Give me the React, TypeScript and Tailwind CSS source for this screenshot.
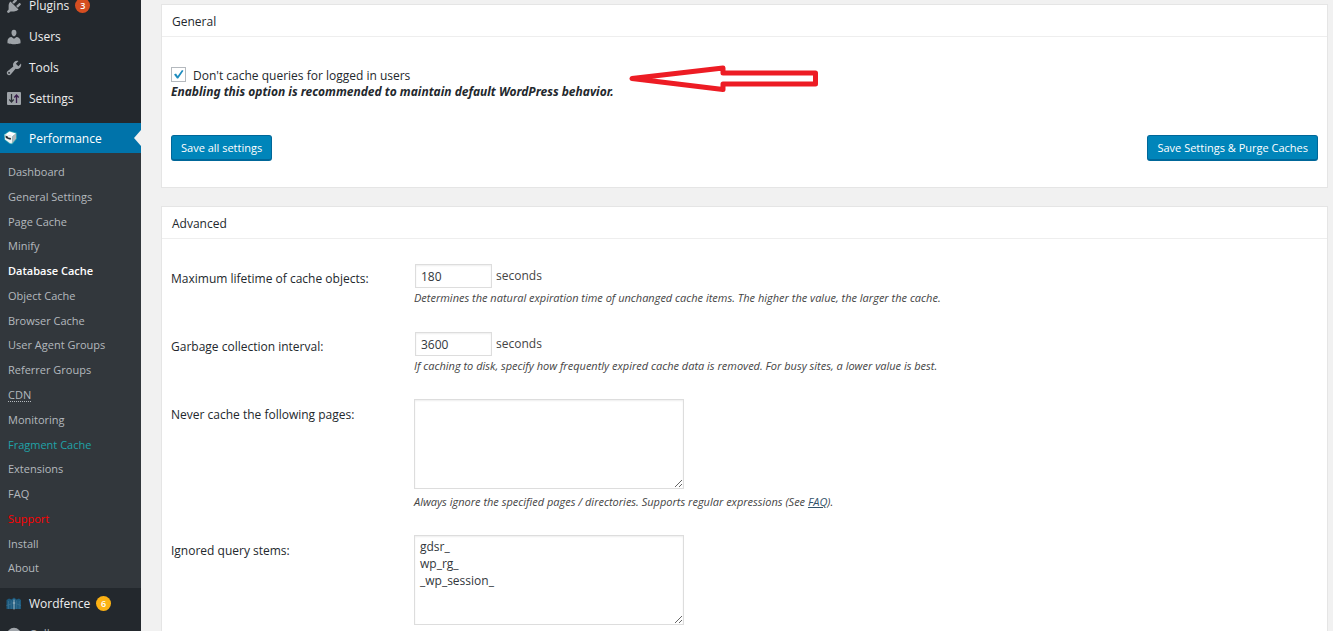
import React, { useState } from 'react';

type Item = { label: string; icon: React.ReactNode; badge?: string };

const iconClass = 'size-[18px]';

const PluginIcon = () => (
  <svg viewBox="0 0 20 20" className={iconClass} fill="currentColor" aria-hidden="true">
    <path d="M13.11 4.36 9.87 7.6 8 5.73l3.24-3.24c.35-.34 1.05-.2 1.56.32.52.51.66 1.21.31 1.55zm-8 1.77.91-1.12 9.01 9.01-1.19.84c-.71.71-2.63 1.16-3.82 1.16H6.14L4.9 17.26c-.59.59-1.54.59-2.12 0a1.49 1.49 0 0 1 0-2.12l1.24-1.24v-3.88c0-1.13.4-3.19 1.09-3.89zm7.26 3.97 3.24-3.24c.34-.35 1.04-.21 1.55.31.52.51.66 1.21.31 1.55l-3.24 3.25z" />
  </svg>
);
const UserIcon = () => (
  <svg viewBox="0 0 20 20" className={iconClass} fill="currentColor" aria-hidden="true">
    <path d="M10 9.25c-2.27 0-2.73-3.44-2.73-3.44C7 4.02 7.82 2 9.97 2c2.16 0 2.98 2.02 2.71 3.81 0 0-.41 3.44-2.68 3.44zm0 2.57L12.72 10c2.39 0 4.52 2.33 4.52 4.53v2.49s-3.65 1.13-7.24 1.13c-3.65 0-7.24-1.13-7.24-1.13v-2.49c0-2.25 1.94-4.48 4.47-4.48z" />
  </svg>
);
const ToolIcon = () => (
  <svg viewBox="0 0 20 20" className={iconClass} fill="currentColor" aria-hidden="true">
    <path d="M16.68 9.77a4.543 4.543 0 0 1-4.95.99l-5.41 6.52c-.99.99-2.59.99-3.58 0s-.99-2.59 0-3.57l6.52-5.42c-.68-1.65-.35-3.61.99-4.95 1.28-1.28 3.12-1.62 4.72-1.06l-2.89 2.89 2.82 2.82 2.86-2.87c.53 1.58.18 3.39-1.08 4.65zM3.81 16.21c.4.39 1.04.39 1.43 0 .4-.4.4-1.04 0-1.43-.39-.4-1.03-.4-1.43 0a1.02 1.02 0 0 0 0 1.43z" />
  </svg>
);
const SettingsIcon = () => (
  <svg viewBox="0 0 18 18" className={iconClass} aria-hidden="true">
    <rect x="2" y="2" width="14" height="13" rx="1" fill="#9ea3a8" />
    <path d="M6.500 4v8M4.300 9.500l2.200 2.500 2.200-2.500" stroke="#2b3036" strokeWidth="1.200" fill="none" />
    <path d="M11.500 13V5M9.300 7.500l2.200-2.500 2.200 2.500" stroke="#3b1f4d" strokeWidth="1.300" fill="none" />
  </svg>
);
const CubeIcon = () => (
  <svg viewBox="0 0 16 16" className="size-4" aria-hidden="true">
    <path d="M1 4.500 6 .800 13.500 2.500 14 8.500 9.500 14.300 6.500 14 1.300 9.500z" fill="#2aa5b5" />
    <path d="M2 4.500 6.500 1.600 13 3.500 9.500 6.300z" fill="#ffffff" />
    <path d="M1.600 4.300 9.500 6 8.800 13.600 7 13.300 2 9.400z" fill="#f1f3f3" />
    <path d="M9.500 6.300 13.200 3.500 13 8.700 9 13.500z" fill="#b4b8ba" />
    <path d="M2.400 5.600 4.800 6.500 5.200 7.500 8 8 7.700 9.800 5.600 9.200 2.800 7.900z" fill="#2a2f33" />
  </svg>
);
const FenceIcon = () => (
  <svg viewBox="0 0 18 18" className={iconClass} aria-hidden="true">
    <path d="M1.500 5 4 3.500 6.500 4.500 9 2.500l2.500 2L14 3.500 16 5v9H1.500z" fill="#1d5a7e" />
    <path d="M3.500 6v8M6.200 5.500V14M11.700 5.500V14M14.200 6v8M1.500 10.500l4.500-1.500M16 10.500 12 9" stroke="#38708f" strokeWidth=".8" />
    <path d="M9 4.500V14.500M7.800 8h2.400" stroke="#a3bac6" strokeWidth="1" />
  </svg>
);
const CollapseIcon = () => (
  <svg viewBox="0 0 20 20" className={iconClass} aria-hidden="true">
    <circle cx="10" cy="10" r="8" fill="currentColor" />
    <path d="M12.500 6v8L7 10z" fill="#23282d" />
  </svg>
);

const topItems: Item[] = [
  { label: 'Plugins', icon: <PluginIcon />, badge: '3' },
  { label: 'Users', icon: <UserIcon /> },
  { label: 'Tools', icon: <ToolIcon /> },
  { label: 'Settings', icon: <SettingsIcon /> },
];

const subItems = [
  'Dashboard', 'General Settings', 'Page Cache', 'Minify', 'Database Cache', 'Object Cache',
  'Browser Cache', 'User Agent Groups', 'Referrer Groups', 'CDN', 'Monitoring', 'Fragment Cache',
  'Extensions', 'FAQ', 'Support', 'Install', 'About',
];

const subStyles: Record<string, string> = {
  'Database Cache': 'font-semibold text-white',
  'Fragment Cache': 'text-[#1fa3a8]',
  Support: 'text-[#ff0000]',
};

function MenuLink({ item, badgeClass }: { item: Item; badgeClass: string }) {
  return (
    <a href="#" className="flex h-[31px] items-center text-[12px] text-[#eeeeee]">
      <span className="flex w-[29px] items-center pl-[5px] text-[#9ea3a8]">{item.icon}</span>
      {item.label}
      {item.badge && (
        <span className={`ml-[6px] flex size-[15px] items-center justify-center rounded-full text-[9px] font-semibold text-white ${badgeClass}`}>
          {item.badge}
        </span>
      )}
    </a>
  );
}

function Sidebar() {
  return (
    <nav className="w-[141px] shrink-0 bg-[#23282d]">
      <div className="-mt-[10px] flex flex-col">
        {topItems.map((item) => (
          <MenuLink key={item.label} item={item} badgeClass="bg-[#d54e21]" />
        ))}
      </div>
      <a href="#" className="mt-[9px] flex h-[30px] items-center bg-[#0073aa] text-[12px] text-white">
        <span className="flex w-[29px] items-center pl-[3px]"><CubeIcon /></span>
        <span className="leading-[30px] pt-px">Performance</span>
        <svg viewBox="0 0 7 16" className="ml-auto h-4 w-[7px]" aria-hidden="true"><path d="M7 0v16L0 8z" fill="#f1f1f1" /></svg>
      </a>
      <ul className="flex h-[435px] flex-col bg-[#32373c] py-[7px]">
        {subItems.map((label) => (
          <li key={label} className="flex flex-1 items-center pl-2 text-[11px]">
            <a href="#" className={subStyles[label] ?? 'text-[#b4b9be]'}>
              {label === 'CDN' ? <abbr title="Content Delivery Network" className="underline decoration-dotted underline-offset-2">CDN</abbr> : label}
            </a>
          </li>
        ))}
      </ul>
      <MenuLink item={{ label: 'Wordfence', icon: <FenceIcon />, badge: '6' }} badgeClass="bg-[#fcb214]" />
      <button type="button" className="flex h-[31px] w-full items-center text-[12px] text-[#a0a5aa]">
        <span className="flex w-[29px] items-center pl-[5px]"><CollapseIcon /></span>
        Collapse menu
      </button>
    </nav>
  );
}

function Panel({ title, children }: { title: string; children: React.ReactNode }) {
  return (
    <section className="border border-[#e5e5e5] bg-white">
      <h3 className="border-b border-[#eeeeee] px-[10px] pt-[2px] text-[12px] leading-[29px] text-[#23282d]">{title}</h3>
      {children}
    </section>
  );
}

function PrimaryButton({ children }: { children: React.ReactNode }) {
  return (
    <button type="button" className="h-[26px] rounded-[3px] border border-b-2 border-[#006799] bg-[#0085ba] px-[9px] text-[11px] leading-[22px] text-white">
      {children}
    </button>
  );
}

const fieldClass = 'border border-[#dddddd] bg-white px-[5px] text-[12px] text-[#32373c] shadow-[inset_0_1px_2px_rgba(0,0,0,0.07)] outline-none';
const hintClass = 'text-[11px] italic leading-[19px] text-[#444444]';

function Row({ id, label, children }: { id: string; label: string; children: React.ReactNode }) {
  return (
    <div className="flex">
      <label htmlFor={id} className="w-[243px] shrink-0 pt-[6px] text-[12px] leading-[20px] text-[#23282d]">{label}</label>
      <div className="min-w-0 flex-1">{children}</div>
    </div>
  );
}

function NumberRow({ id, label, value, hint }: { id: string; label: string; value: string; hint: string }) {
  return (
    <Row id={id} label={label}>
      <div className="flex h-[25px] items-center gap-[4px] pt-px text-[12px] text-[#444444]">
        <input id={id} type="text" defaultValue={value} className={`ml-px h-6 w-[77px] ${fieldClass}`} />
        seconds
      </div>
      <p className={hintClass}>{hint}</p>
    </Row>
  );
}

export default function App() {
  const [checked, setChecked] = useState(true);
  return (
    <div className="flex h-screen overflow-hidden bg-[#f1f1f1] font-['Open_Sans','Noto_Sans',sans-serif]">
      <Sidebar />
      <main className="flex min-w-0 flex-1 flex-col gap-[18px] pl-5 pr-[5px] pt-1">
        <Panel title="General">
          <div className="px-[9px] pb-[26px] pt-[28px]">
            <div className="flex items-start">
              <div className="w-[458px]">
                <label className="flex h-5 items-start gap-[7px] text-[12px] leading-[21px] text-[#23282d]">
                  <span className="mt-[2px] grid size-[15px]">
                    <input type="checkbox" checked={checked} onChange={(e) => setChecked(e.target.checked)} className="col-start-1 row-start-1 size-[15px] appearance-none border border-[#b4b9be] bg-white" />
                    {checked && (
                      <svg viewBox="0 0 15 15" className="pointer-events-none col-start-1 row-start-1 size-[15px]" aria-hidden="true">
                        <path d="M3 7.500 5 6.500 6.700 9 11 3l1.500.7L7.200 11.500H6z" fill="#1e8cbe" />
                      </svg>
                    )}
                  </span>
                  Don't cache queries for logged in users
                </label>
                <p className="whitespace-nowrap font-['Noto_Sans','Open_Sans',sans-serif] text-[12px] font-bold italic leading-[14px] text-[#23282d]">
                  Enabling this option is recommended to maintain default WordPress behavior.
                </p>
              </div>
              <svg viewBox="0 0 190 28" className="h-7 w-[190px]" fill="none" stroke="#ed1c24" strokeWidth="5" aria-hidden="true">
                <path d="M3 13.500 94 3v5h92.500v11H94v5.500z" strokeLinejoin="round" />
              </svg>
            </div>
            <div className="mt-[36px] flex justify-between">
              <PrimaryButton>Save all settings</PrimaryButton>
              <PrimaryButton>Save Settings &amp; Purge Caches</PrimaryButton>
            </div>
          </div>
        </Panel>
        <Panel title="Advanced">
          <div className="flex flex-col gap-6 px-[9px] pb-6 pt-6">
            <NumberRow id="lifetime" label="Maximum lifetime of cache objects:" value="180" hint="Determines the natural expiration time of unchanged cache items. The higher the value, the larger the cache." />
            <NumberRow id="gc" label="Garbage collection interval:" value="3600" hint="If caching to disk, specify how frequently expired cache data is removed. For busy sites, a lower value is best." />
            <Row id="never" label="Never cache the following pages:">
              <textarea id="never" className={`mb-[3px] block h-[90px] w-[270px] py-[3px] ${fieldClass}`} />
              <p className={hintClass}>
                Always ignore the specified pages / directories. Supports regular expressions (See{' '}
                <a href="#" className="text-[#32536a] underline">FAQ</a>).
              </p>
            </Row>
            <Row id="stems" label="Ignored query stems:">
              <textarea id="stems" defaultValue={'gdsr_\nwp_rg_\n_wp_session_'} className={`block h-[90px] w-[270px] py-[2px] leading-[17px] ${fieldClass}`} />
            </Row>
          </div>
        </Panel>
      </main>
    </div>
  );
}
